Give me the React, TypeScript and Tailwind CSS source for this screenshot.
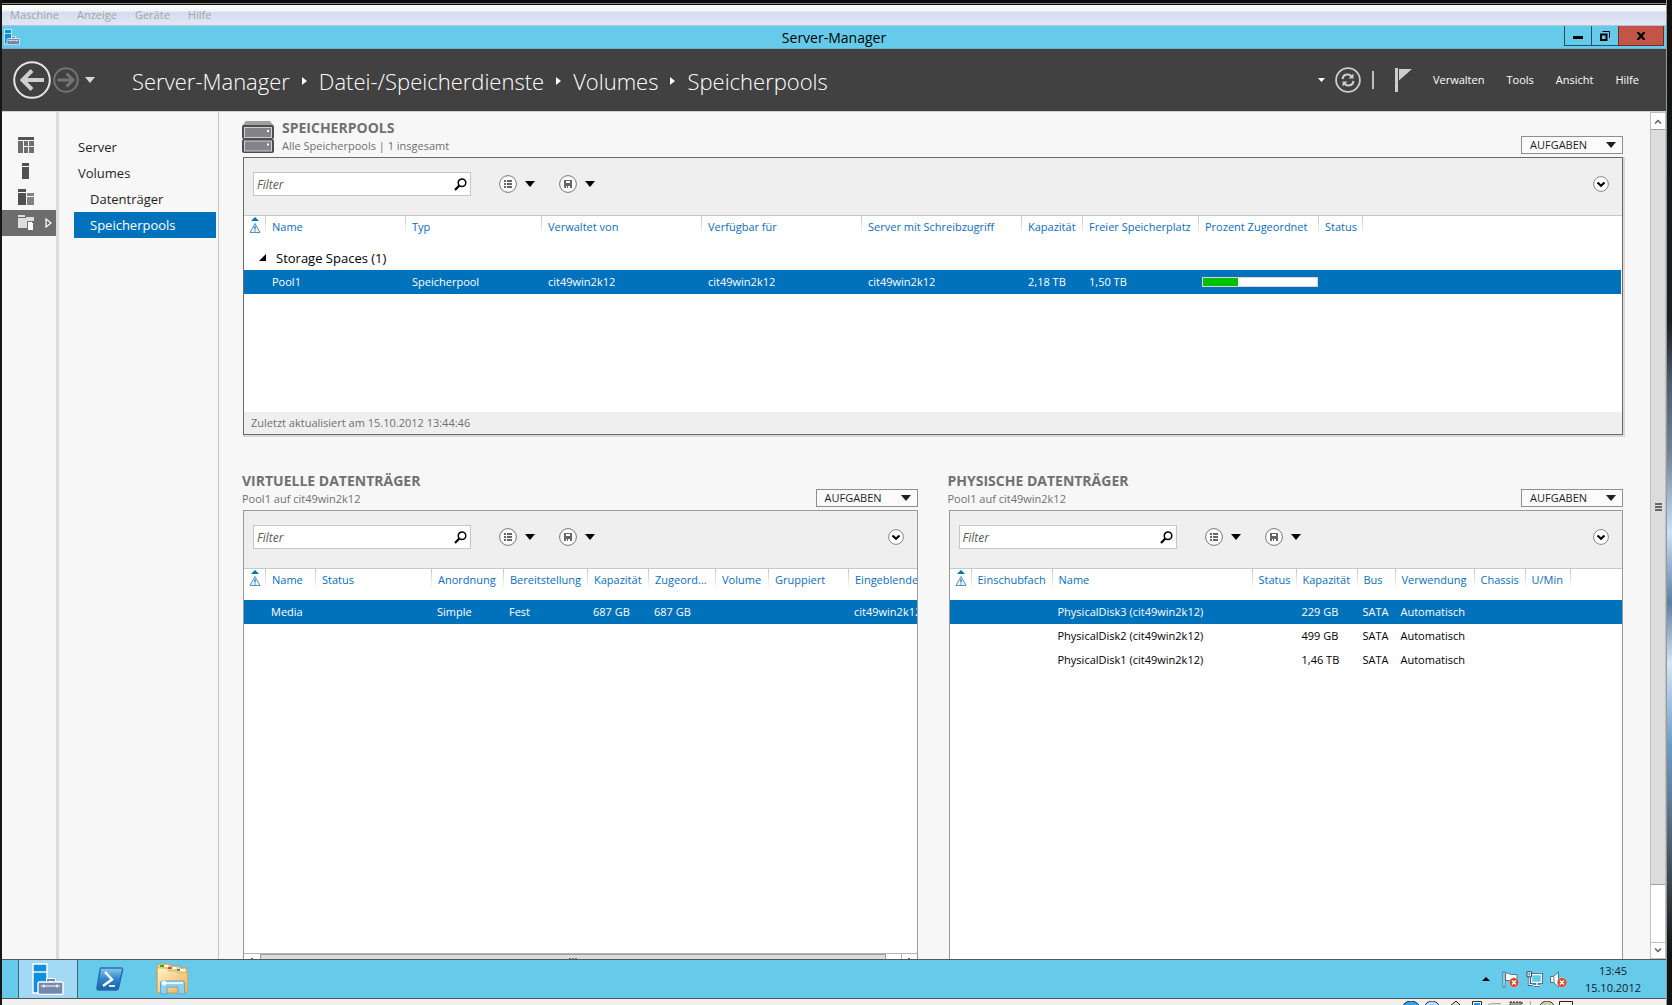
import type { ReactNode } from "react"

type Column = { label: ReactNode; width?: number }
type Row = { cells: ReactNode[]; selected?: boolean }

const crumbs = ["Server-Manager", "Datei-/Speicherdienste", "Volumes", "Speicherpools"]

const hostMenu = ["Maschine", "Anzeige", "Geräte", "Hilfe"]

const menu = ["Verwalten", "Tools", "Ansicht", "Hilfe"]

const subNav = [
  { label: "Server", level: 0 },
  { label: "Volumes", level: 0 },
  { label: "Datenträger", level: 1 },
  { label: "Speicherpools", level: 1, active: true },
]

const poolColumns: Column[] = [
  { label: <SortWarning />, width: 21 },
  { label: "Name", width: 140 },
  { label: "Typ", width: 136 },
  { label: "Verwaltet von", width: 160 },
  { label: "Verfügbar für", width: 160 },
  { label: "Server mit Schreibzugriff", width: 160 },
  { label: "Kapazität", width: 61 },
  { label: "Freier Speicherplatz", width: 116 },
  { label: "Prozent Zugeordnet", width: 120 },
  { label: "Status", width: 44 },
  { label: "" },
]

const poolRows: Row[] = [
  {
    selected: true,
    cells: [
      "",
      "Pool1",
      "Speicherpool",
      "cit49win2k12",
      "cit49win2k12",
      "cit49win2k12",
      "2,18 TB",
      "1,50 TB",
      <UsageBar percent={31} />,
      "",
      "",
    ],
  },
]

const virtualColumns: Column[] = [
  { label: <SortWarning />, width: 21 },
  { label: "Name", width: 50 },
  { label: "Status", width: 116 },
  { label: "Anordnung", width: 72 },
  { label: "Bereitstellung", width: 84 },
  { label: "Kapazität", width: 61 },
  { label: "Zugeord...", width: 67 },
  { label: "Volume", width: 53 },
  { label: "Gruppiert", width: 80 },
  { label: "Eingeblendet" },
]

const virtualRows: Row[] = [
  { selected: true, cells: ["", "Media", "", "Simple", "Fest", "687 GB", "687 GB", "", "", "cit49win2k12"] },
]

const physicalColumns: Column[] = [
  { label: <SortWarning />, width: 21 },
  { label: "Einschubfach", width: 81 },
  { label: "Name", width: 200 },
  { label: "Status", width: 44 },
  { label: "Kapazität", width: 61 },
  { label: "Bus", width: 38 },
  { label: "Verwendung", width: 79 },
  { label: "Chassis", width: 51 },
  { label: "U/Min", width: 45 },
  { label: "" },
]

const physicalRows: Row[] = [
  {
    selected: true,
    cells: ["", "", "PhysicalDisk3 (cit49win2k12)", "", "229 GB", "SATA", "Automatisch", "", "", ""],
  },
  { cells: ["", "", "PhysicalDisk2 (cit49win2k12)", "", "499 GB", "SATA", "Automatisch", "", "", ""] },
  { cells: ["", "", "PhysicalDisk1 (cit49win2k12)", "", "1,46 TB", "SATA", "Automatisch", "", "", ""] },
]

function Caret({ className = "" }: { className?: string }) {
  return (
    <svg width="10" height="6" viewBox="0 0 10 6" className={className} aria-hidden="true">
      <path d="M0 0h10L5 6z" fill="currentColor" />
    </svg>
  )
}

function SortWarning() {
  return (
    <svg width="12" height="17" viewBox="0 0 12 17" className="block" aria-hidden="true">
      <path d="M2 4l4-4 4 4z" fill="#0072bc" />
      <path d="M6 6.5L11 15.5H1z" fill="#eef5fa" stroke="#5a8fb5" />
      <path d="M6 9v3.5M6 13.5v1" stroke="#0072bc" strokeWidth="1.2" />
    </svg>
  )
}

function UsageBar({ percent }: { percent: number }) {
  return (
    <div className="-ml-[3px] h-[10px] border border-[#d4d4d4] bg-white">
      <div className="h-full bg-[#00c000]" style={{ width: `${percent}%` }} />
    </div>
  )
}

function ListIcon() {
  return (
    <svg width="18" height="18" viewBox="0 0 18 18" className="block" aria-hidden="true">
      <circle cx="9" cy="9" r="8.4" fill="#fff" stroke="#777" />
      <path d="M5 5h2v2H5zM5 8h2v2H5zM5 11h2v2H5zM8 5h5v2H8zM8 8h5v2H8zM8 11h5v2H8z" fill="#666" />
    </svg>
  )
}

function SaveIcon() {
  return (
    <svg width="18" height="18" viewBox="0 0 18 18" className="block" aria-hidden="true">
      <circle cx="9" cy="9" r="8.4" fill="#fff" stroke="#777" />
      <path d="M5 5h8v8H5z" fill="#666" />
      <path d="M7 6h4v2H7zM7 11h1v2H7zM9 11h2v2H9z" fill="#fff" />
    </svg>
  )
}

function PoolIcon() {
  return (
    <svg width="32" height="33" viewBox="0 0 32 33" aria-hidden="true">
      <path d="M4 0h24l4 5H0z" fill="#a0a0a0" />
      <rect y="4" width="32" height="14" rx="2" fill="#4d4d4d" />
      <rect y="18" width="32" height="14" rx="2" fill="#4d4d4d" />
      <rect x="2.5" y="6.5" width="27" height="10" fill="#84828a" stroke="#d0d0d0" />
      <rect x="2.5" y="20" width="27" height="10" fill="#84828a" stroke="#d0d0d0" />
      <path d="M25 9h2v2h-2zM25 22.5h2v2h-2z" fill="#fff" />
    </svg>
  )
}

function ServerManagerIcon({ size }: { size: number }) {
  return (
    <svg width={size} height={size} viewBox="0 0 32 32" aria-hidden="true">
      <path d="M1 1h14v29H1z" fill="#0f8fdc" stroke="#fff" strokeWidth="1.4" />
      <path d="M1 9h14" stroke="#fff" strokeWidth="1.4" />
      <path d="M16 20v-3h6v3" fill="none" stroke="#fff" strokeWidth="4" />
      <path d="M16 20v-3h6v3" fill="none" stroke="#6c83a6" strokeWidth="2" />
      <rect x="6" y="19" width="25" height="12.500" rx="1.5" fill="#7388ab" stroke="#fff" strokeWidth="1.4" />
      <path d="M9 23h19M12 21.5v3M25 21.5v3" stroke="#fff" strokeWidth="1.2" />
    </svg>
  )
}

function TasksButton() {
  return (
    <button
      type="button"
      className="mb-[3px] flex h-[18px] w-[102px] items-center justify-between border border-[#8f8f8f] bg-[#fbfbfb] pr-[6px] pl-2 text-[11px] leading-4 text-[#1e1e28]"
    >
      AUFGABEN
      <Caret />
    </button>
  )
}

function PanelHeader({ title, subtitle, icon }: { title: string; subtitle: string; icon?: ReactNode }) {
  return (
    <div className="-ml-px flex h-[45px] items-end justify-between">
      <div className="flex items-end gap-2 pb-[3px]">
        {icon}
        <div className="text-[#707070]">
          <h2 className="text-sm leading-[18px] font-bold">{title}</h2>
          <p className="text-[11px] leading-[17px]">{subtitle}</p>
        </div>
      </div>
      <TasksButton />
    </div>
  )
}

function Toolbar({ id }: { id: string }) {
  return (
    <div className="flex h-[58px] shrink-0 items-start border-b border-[#c8c8c8] bg-[#efefef] pt-[14px] pr-[13px] pl-[9px]">
      <div className="flex h-6 w-[218px] items-center border border-[#c6c6c6] bg-white pr-[3px]">
        <label htmlFor={id} className="sr-only">
          Filter
        </label>
        <input
          id={id}
          placeholder="Filter"
          className="h-full min-w-0 flex-1 bg-transparent pl-[3px] text-xs leading-[22px] italic outline-none placeholder:text-[#5a5a5a]"
        />
        <button type="button" aria-label="Suchen">
          <svg width="13" height="13" viewBox="0 0 13 13" className="block">
            <circle cx="8" cy="4.8" r="3.8" fill="none" stroke="#000" strokeWidth="1.5" />
            <path d="M5.3 7.5L1 12" stroke="#000" strokeWidth="2.2" />
          </svg>
        </button>
      </div>
      <button type="button" aria-label="Abfragen" className="ml-7 flex h-6 items-center gap-2">
        <ListIcon />
        <Caret />
      </button>
      <button type="button" aria-label="Speichern" className="ml-6 flex h-6 items-center gap-2">
        <SaveIcon />
        <Caret />
      </button>
      <button type="button" aria-label="Erweitern" className="ml-auto flex h-6 items-center">
        <svg width="16" height="16" viewBox="0 0 16 16">
          <circle cx="8" cy="8" r="7.4" fill="#fff" stroke="#888" />
          <path d="M4.500 6.500L8 9.800l3.500-3.300" fill="none" stroke="#000" strokeWidth="2.2" />
        </svg>
      </button>
    </div>
  )
}

function Grid({ columns, rows, group }: { columns: Column[]; rows: Row[]; group?: string }) {
  return (
    <table className="w-full table-fixed border-collapse text-left text-[11px] leading-4">
      <colgroup>
        {columns.map((column, index) => (
          <col key={index} style={column.width ? { width: column.width } : undefined} />
        ))}
      </colgroup>
      <thead>
        <tr className="h-[31px]">
          {columns.map((column, index) => (
            <th
              key={index}
              className={
                index === 0
                  ? "pt-px pl-[5px] align-top font-normal"
                  : "overflow-hidden bg-[linear-gradient(#c4c4c4,#ffffff)] bg-[length:1px_20px] bg-no-repeat pt-[3px] pl-[7px] align-top font-normal whitespace-nowrap text-[#0a6ebd]"
              }
            >
              {column.label}
            </th>
          ))}
        </tr>
      </thead>
      <tbody>
        {group && (
          <tr className="h-[23px]">
            <td colSpan={columns.length} className="pb-[2px] pl-[15px] text-[13px] leading-[18px]">
              <div className="flex items-center gap-[10px]">
                <svg width="7" height="7" viewBox="0 0 7 7" aria-hidden="true">
                  <path d="M7 0v7H0z" />
                </svg>
                {group}
              </div>
            </td>
          </tr>
        )}
        {rows.map((row, index) => (
          <tr key={index} className={row.selected ? "h-6 bg-[#0072bc] text-white" : "h-6 text-black"}>
            {row.cells.map((cell, cellIndex) => (
              <td
                key={cellIndex}
                className={group ? "overflow-hidden pl-[7px] whitespace-nowrap" : "overflow-hidden pl-[6px] whitespace-nowrap"}
              >
                {cell}
              </td>
            ))}
          </tr>
        ))}
      </tbody>
    </table>
  )
}

function HostWindowBars() {
  return (
    <>
      <nav className="flex h-[21px] shrink-0 items-center gap-[18px] border-b border-[#b9bfd6] bg-[linear-gradient(#ffffff_0%,#f4f6fb_30%,#d6dcef_36%,#e2e7f6_100%)] pl-2 text-[11px] leading-4 text-[#a2a4a8]">
        {hostMenu.map((item) => (
          <a key={item} href="#">
            {item}
          </a>
        ))}
      </nav>
      <div className="grid h-[23px] shrink-0 grid-cols-[1fr_auto_1fr] items-start border-b border-[#6faecb] bg-[#66caea]">
        <div className="pt-[3px] pl-[2px]">
          <ServerManagerIcon size={16} />
        </div>
        <h1 className="text-sm leading-6 text-black">Server-Manager</h1>
        <div className="flex h-5 justify-end pr-[2px]">
          <button
            type="button"
            aria-label="Minimieren"
            className="flex w-7 items-end justify-center border border-t-0 border-[#24515f] pb-[6px]"
          >
            <span className="h-[3px] w-[10px] bg-black" />
          </button>
          <button
            type="button"
            aria-label="Verkleinern"
            className="flex w-[26px] items-center justify-center border-b border-[#24515f]"
          >
            <svg width="10" height="10" viewBox="0 0 10 10">
              <path d="M1 3.500h5.500V9H1z" fill="none" stroke="#000" strokeWidth="2" />
              <path d="M2.500.5h7V7" fill="none" stroke="#000" />
            </svg>
          </button>
          <button
            type="button"
            aria-label="Schließen"
            className="flex w-[46px] items-center justify-center border border-t-0 border-[#6b2f28] bg-[#c35548]"
          >
            <svg width="10" height="8" viewBox="0 0 10 8">
              <path d="M1.500 0l7 8M8.500 0l-7 8" stroke="#000" strokeWidth="2.2" />
            </svg>
          </button>
        </div>
      </div>
    </>
  )
}

function Header() {
  return (
    <header className="flex h-[63px] shrink-0 items-center border-b border-[#cfcfcf] bg-[#414141] pl-[11px] text-white">
      <button type="button" aria-label="Zurück">
        <svg width="38" height="38" viewBox="0 0 38 38">
          <circle cx="19" cy="19" r="17.8" fill="none" stroke="#e6e6e6" strokeWidth="2" />
          <path d="M31 19H10M19 9.500L9.500 19l9.500 9.500" fill="none" stroke="#cfcfcf" strokeWidth="4" />
        </svg>
      </button>
      <button type="button" aria-label="Vorwärts" className="ml-[2px]">
        <svg width="26" height="26" viewBox="0 0 26 26">
          <circle cx="13" cy="13" r="11.8" fill="none" stroke="#747474" strokeWidth="2" />
          <path d="M4.500 13H20M13.500 6.500L20 13l-6.500 6.500" fill="none" stroke="#747474" strokeWidth="3" />
        </svg>
      </button>
      <button type="button" aria-label="Verlauf" className="ml-[6px] text-[#d8d8d8]">
        <Caret />
      </button>
      <nav className="ml-[37px] flex items-center pt-[2px] text-[22px] leading-8 font-light">
        {crumbs.map((crumb, index) => (
          <span key={crumb} className="flex items-center">
            {index > 0 && (
              <svg width="5" height="8" viewBox="0 0 5 8" className="mx-3" aria-hidden="true">
                <path d="M0 0l5 4-5 4z" fill="#fff" />
              </svg>
            )}
            <a href="#">{crumb}</a>
          </span>
        ))}
      </nav>
      <div className="ml-auto flex items-center pr-[27px]">
        <button type="button" aria-label="Benachrichtigungen">
          <svg width="7" height="4" viewBox="0 0 7 4">
            <path d="M0 0h7L3.500 4z" fill="#fff" />
          </svg>
        </button>
        <button type="button" aria-label="Aktualisieren" className="ml-[10px]">
          <svg width="26" height="26" viewBox="0 0 26 26" fill="none" stroke="#cdcdcd">
            <circle cx="13" cy="13" r="11.9" strokeWidth="1.8" />
            <path d="M7.500 12c.5-3 2.500-4.500 5-4.500 2 0 3.500.8 4.500 2.500M18.500 14c-.5 3-2.500 4.500-5 4.500-2 0-3.500-.8-4.500-2.500" strokeWidth="2.2" />
            <path d="M18.500 6.500v5h-5zM7.500 19.500v-5h5z" fill="#cdcdcd" stroke="none" />
          </svg>
        </button>
        <span className="ml-[11px] h-[18px] w-[2px] bg-[#bdbdbd]" />
        <button type="button" aria-label="Warnungen" className="ml-[21px]">
          <svg width="17" height="24" viewBox="0 0 17 24">
            <path d="M0 0h3v24H0z" fill="#cdcdcd" />
            <path d="M4 1h13L4 12.500z" fill="#cdcdcd" />
          </svg>
        </button>
        <nav className="ml-[21px] flex gap-[22px] text-[11px] leading-4">
          {menu.map((item) => (
            <a key={item} href="#">
              {item}
            </a>
          ))}
        </nav>
      </div>
    </header>
  )
}

function IconRail() {
  return (
    <nav className="flex w-[54px] shrink-0 flex-col pt-5">
      <a href="#" aria-label="Dashboard" className="flex h-[26px] items-center pl-4">
        <svg width="16" height="16" viewBox="0 0 16 16" fill="#555">
          <path d="M0 0h16v3H0z" />
          <path d="M0 4h5v12H0zM6 4h4v5H6zM11 4h5v5h-5zM6 10h4v6H6zM11 10h5v6h-5z" fill="#6e6e6e" />
        </svg>
      </a>
      <a href="#" aria-label="Lokaler Server" className="flex h-[26px] items-center pl-5">
        <svg width="7" height="16" viewBox="0 0 7 16" fill="#505050">
          <path d="M0 0h7v3H0zM0 4h7v12H0z" />
        </svg>
      </a>
      <a href="#" aria-label="Alle Server" className="flex h-[26px] items-center pl-4">
        <svg width="16" height="16" viewBox="0 0 16 16" fill="#505050">
          <path d="M0 0h8v3H0zM0 4h8v12H0z" />
          <path d="M9 4h7v3H9zM9 8h7v8H9z" fill="#848088" />
        </svg>
      </a>
      <a href="#" aria-label="Datei-/Speicherdienste" className="flex h-[26px] items-center bg-[#6d6d6d] pl-4">
        <svg width="16" height="16" viewBox="0 0 16 16">
          <path d="M0 0h7v2H0zM0 3h9v10H0zM8 2h8v4H8z" fill="#dedede" />
          <path d="M9.500 6.500h4l2 2v7h-6z" fill="#fff" stroke="#6d6d6d" />
        </svg>
        <svg width="7" height="10" viewBox="0 0 7 10" className="ml-[11px]">
          <path d="M1 1l5 4-5 4z" fill="none" stroke="#fff" strokeWidth="1.2" />
        </svg>
      </a>
    </nav>
  )
}

function SubNav() {
  return (
    <nav className="flex w-[163px] shrink-0 flex-col border-r border-l-[3px] border-r-[#c4c4c4] border-l-[#dcdcdc] pt-[22px] pr-[2px] pl-[15px] text-[13px] leading-[26px] text-[#1e1e28]">
      {subNav.map((item) => (
        <a
          key={item.label}
          href="#"
          className={`h-[26px] ${item.level ? "pl-4" : "pl-1"} ${item.active ? "bg-[#0072bc] text-white" : ""}`}
        >
          {item.label}
        </a>
      ))}
    </nav>
  )
}

function VerticalScrollbar() {
  return (
    <div className="flex w-4 shrink-0 flex-col border border-[#c0c0c0] bg-white">
      <button type="button" aria-label="Nach oben" className="flex h-4 items-center justify-center">
        <svg width="8" height="5" viewBox="0 0 8 5">
          <path d="M1 4.500L4 1.500l3 3" fill="none" stroke="#606060" strokeWidth="1.5" />
        </svg>
      </button>
      <div className="flex flex-[755] flex-col items-center justify-center gap-px border-y border-[#a0a0a0] bg-[#dcdcdc]">
        <span className="h-[2px] w-[7px] bg-[#666]" />
        <span className="h-[2px] w-[7px] bg-[#666]" />
        <span className="h-[2px] w-[7px] bg-[#666]" />
      </div>
      <div className="flex-[57]" />
      <button type="button" aria-label="Nach unten" className="flex h-4 items-center justify-center border-t border-[#c0c0c0]">
        <svg width="8" height="5" viewBox="0 0 8 5">
          <path d="M1 .5l3 3 3-3" fill="none" stroke="#606060" strokeWidth="1.5" />
        </svg>
      </button>
    </div>
  )
}

// Only the upper edge is visible, the rest lies under the taskbar.
function HorizontalScrollbar() {
  return (
    <div className="flex h-[6px] shrink-0 overflow-hidden border-t border-[#b4b4b4] bg-white">
      <div className="flex w-4 items-end justify-center">
        <span className="h-px w-[2px] bg-[#606060]" />
      </div>
      <div className="flex flex-[624] items-end justify-center gap-px border border-b-0 border-[#a0a0a0] bg-[#dcdcdc]">
        <span className="h-px w-[2px] bg-[#777]" />
        <span className="h-px w-[2px] bg-[#777]" />
        <span className="h-px w-[2px] bg-[#777]" />
      </div>
      <div className="flex-[14]" />
      <div className="flex w-4 items-end justify-center border-l border-[#b4b4b4]">
        <span className="h-px w-[2px] bg-[#606060]" />
      </div>
    </div>
  )
}

function ErrorBadge() {
  return (
    <g>
      <circle cx="12" cy="11.5" r="4.8" fill="#cf4a2c" stroke="#f3c1b4" strokeWidth=".6" />
      <path d="M10 9.500l4 4M14 9.500l-4 4" stroke="#fff" strokeWidth="1.5" />
    </g>
  )
}

function Taskbar() {
  return (
    <footer className="flex h-10 shrink-0 items-stretch border-y border-[#555] bg-[#66caea] pl-4">
      <button
        type="button"
        aria-label="Server-Manager"
        className="flex w-[60px] items-center justify-center border-x border-[#3b6478] bg-[#a2daf6]"
      >
        <ServerManagerIcon size={32} />
      </button>
      <button type="button" aria-label="PowerShell" className="ml-4 flex items-center">
        <svg width="32" height="28" viewBox="0 0 32 28">
          <defs>
            <linearGradient id="ps" x1="0" y1="0" x2="0" y2="1">
              <stop offset="0" stopColor="#8ccbee" />
              <stop offset=".5" stopColor="#2d86c9" />
              <stop offset="1" stopColor="#1b5fa8" />
            </linearGradient>
          </defs>
          <path d="M7 3h20c1 0 2 1 1.500 2l-4 18c-.3 1.200-1 2-2.200 2H4.500C3.500 25 2.800 24 3 23L6 5c.2-1.200.3-2 1-2z" fill="url(#ps)" stroke="#2b6cac" strokeWidth="1.5" />
          <path d="M11 7l7 7.500L9 21" fill="none" stroke="#fff" strokeWidth="2.5" />
          <path d="M15 21h6" stroke="#dbe9f5" strokeWidth="2" />
        </svg>
      </button>
      <button type="button" aria-label="Explorer" className="ml-[30px] flex items-center">
        <svg width="33" height="32" viewBox="0 0 33 32">
          <defs>
            <linearGradient id="folder" x1="0" y1="0" x2="1" y2="1">
              <stop offset="0" stopColor="#fdf6c8" />
              <stop offset="1" stopColor="#f2ac4e" />
            </linearGradient>
          </defs>
          <path d="M1 3l2-2h10l2 2h8l2 2h6v25H1V3z" fill="#f4cf94" stroke="#d9984a" />
          <path d="M4 2h4v2H4z" fill="#19b519" />
          <path d="M8 2h4v2H8zM16 4h4v2h-4zM24 6h5v2h-5z" fill="#fff" />
          <path d="M12 4h4v2h-4z" fill="#c25a3c" />
          <path d="M21 6h3v2h-3z" fill="#2592e4" />
          <path d="M1.500 5H11l2 3h7l2 2h9.500v19.500h-30z" fill="url(#folder)" stroke="#e0a75c" strokeWidth=".8" />
          <path d="M4.500 31V20c0-1.500 1-2 2-2h20c1 0 2 .5 2 2v11H22v-7H11v7z" fill="#8ed2f0" stroke="#5aa9d4" />
          <path d="M6 20h21" stroke="#e2f6ff" strokeWidth="2" />
          <circle cx="8" cy="20" r="2.5" fill="#fff" opacity=".8" />
        </svg>
      </button>
      <div className="ml-auto flex items-center pr-[25px]">
        <button type="button" aria-label="Ausgeblendete Symbole" className="mr-3">
          <svg width="8" height="4" viewBox="0 0 8 4">
            <path d="M0 4l4-4 4 4z" />
          </svg>
        </button>
        <div className="flex gap-[7px]">
          <svg width="17" height="17" viewBox="0 0 17 17">
            <path d="M1 1h2v15H1z" fill="#fff" stroke="#2b5b78" strokeWidth=".8" />
            <path d="M3.500 2.500c3-1.500 4 1 6 1h5.500v6H3.500z" fill="#fff" stroke="#2b5b78" strokeWidth=".8" />
            <ErrorBadge />
          </svg>
          <svg width="17" height="17" viewBox="0 0 17 17" fill="#66caea" stroke="#24506a">
            <path d="M5.500 3.500h10v8h-10zM8 14.500h6M11 12v2" strokeWidth="3" />
            <path d="M5.500 3.500h10v8h-10zM8 14.500h6M11 12v2" stroke="#fff" strokeWidth="1.4" />
            <path d="M3.200 6v7.500H6" fill="none" strokeWidth="2.6" />
            <path d="M3.200 6v7.500H6" fill="none" stroke="#fff" strokeWidth="1.2" />
            <path d="M1 .8h4.500v5H1z" fill="#fff" />
            <path d="M3.200 2v2.500" />
          </svg>
          <svg width="17" height="17" viewBox="0 0 17 17">
            <path d="M.6 5.500h3L8.500 1v15l-5-4.500H.6z" fill="#fff" stroke="#3a6780" strokeWidth=".9" />
            <path d="M4 6v6" stroke="#3a6780" strokeWidth=".8" />
            <ErrorBadge />
          </svg>
        </div>
        <time className="ml-[18px] text-center text-[11px] leading-[17px] text-[#10202c]">
          13:45
          <br />
          15.10.2012
        </time>
      </div>
    </footer>
  )
}

function HostStatusBar() {
  return (
    <div className="flex h-[6px] shrink-0 items-start justify-end overflow-hidden bg-[#f0f0f0] pt-[2px] pr-[92px]">
      <svg width="172" height="4" viewBox="0 0 172 4" aria-hidden="true">
        <ellipse cx="9" cy="6" rx="8" ry="6" fill="#3aa0e0" stroke="#222a40" />
        <ellipse cx="30" cy="6" rx="7" ry="6" fill="#b8def5" stroke="#222a40" />
        <path d="M48 5l6-5 5 5" fill="#ddd" stroke="#222" />
        <path d="M70.500.5h9V5h-9z" fill="#fff" stroke="#222a40" />
        <path d="M72 2h6v3h-6z" fill="#2592e4" />
        <path d="M86 3.500l4-1h8v3" fill="#ddd" stroke="#aaa" />
        <path d="M108 1h12v5h-12z" fill="#999" stroke="#222" strokeDasharray="2 1" />
        <path d="M128.500 0v4" stroke="#aaa" />
        <ellipse cx="145" cy="6" rx="7" ry="6" fill="#c8ccb8" stroke="#333" />
        <path d="M157.500.5h13V5h-13z" fill="#fafafa" stroke="#222" />
      </svg>
    </div>
  )
}

export default function App() {
  return (
    <div className="flex h-screen overflow-hidden bg-[#121212] font-['Open_Sans','Noto_Sans',sans-serif]">
      <div className="flex min-w-0 flex-1 flex-col border-l-2 border-[#161616]">
        <div className="h-[5px] shrink-0 bg-[linear-gradient(#0c0c0c_3px,#8a8a8a_3px,#8a8a8a_4px,#0c0c0c_4px)]" />
        <HostWindowBars />
        <Header />
        <div className="flex min-h-0 flex-1 bg-[#f7f7f7]">
          <IconRail />
          <SubNav />
          <main className="flex min-w-0 flex-1 flex-col pr-[27px] pl-6">
            <section>
              <PanelHeader title="SPEICHERPOOLS" subtitle="Alle Speicherpools | 1 insgesamt" icon={<PoolIcon />} />
              <div className="flex h-[278px] flex-col border border-[#6a6a6a] bg-white shadow-[1px_1px_0_1px_#d8d8d8]">
                <Toolbar id="filter-pools" />
                <div className="flex-1 overflow-hidden pr-px">
                  <Grid columns={poolColumns} rows={poolRows} group="Storage Spaces (1)" />
                </div>
                <p className="bg-[#efefef] pl-[7px] text-[11px] leading-[22px] text-[#707070]">
                  Zuletzt aktualisiert am 15.10.2012 13:44:46
                </p>
              </div>
            </section>
            <div className="mt-[30px] flex min-h-0 flex-1 gap-[31px]">
              <section className="flex min-w-0 flex-1 flex-col">
                <PanelHeader title="VIRTUELLE DATENTRÄGER" subtitle="Pool1 auf cit49win2k12" />
                <div className="flex flex-1 flex-col border border-b-0 border-[#999] bg-white">
                  <Toolbar id="filter-virtual" />
                  <div className="flex-1 overflow-hidden">
                    <Grid columns={virtualColumns} rows={virtualRows} />
                  </div>
                  <HorizontalScrollbar />
                </div>
              </section>
              <section className="flex min-w-0 flex-1 flex-col">
                <PanelHeader title="PHYSISCHE DATENTRÄGER" subtitle="Pool1 auf cit49win2k12" />
                <div className="flex flex-1 flex-col border border-b-0 border-[#999] bg-white">
                  <Toolbar id="filter-physical" />
                  <Grid columns={physicalColumns} rows={physicalRows} />
                </div>
              </section>
            </div>
          </main>
          <VerticalScrollbar />
        </div>
        <Taskbar />
        <HostStatusBar />
      </div>
      <div className="w-[6px] shrink-0 border-l border-[#999] bg-[linear-gradient(#111_0%,#1c1e20_32%,#4d5b6c_38%,#6f8296_45%,#c8e2f8_53%,#5d7f9f_60%,#d4e6f6_66%,#6f9cc4_74%,#5f7890_80%,#3a444c_88%,#101214_95%)]" />
    </div>
  )
}
